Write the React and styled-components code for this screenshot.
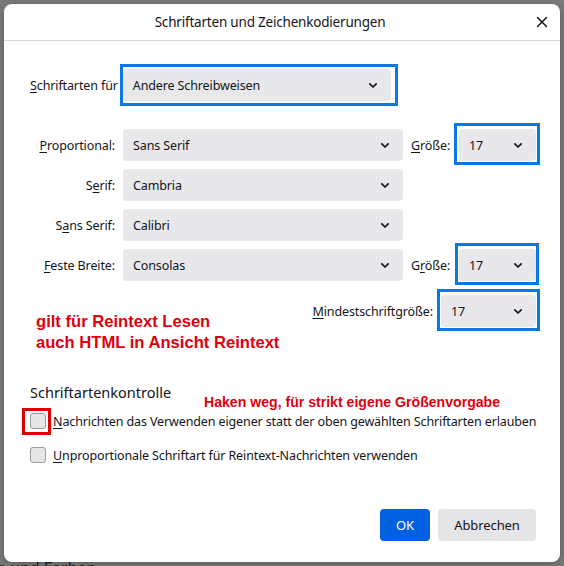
import React from "react";
import styled, { createGlobalStyle } from "styled-components";

const GlobalStyle = createGlobalStyle`
  html, body { margin: 0; padding: 0; }
  body {
    width: 564px;
    height: 566px;
    overflow: hidden;
    background: #7b7b7b;
    font-family: "Noto Sans", "Open Sans", sans-serif;
    color: #15141a;
  }
  * { box-sizing: border-box; }
`;

const Stage = styled.div`
  position: relative;
  width: 564px;
  height: 566px;
  padding: 4px 4px 0 4px;
  background: #7b7b7b;
  overflow: hidden;
`;

const BackText = styled.div`
  position: absolute;
  left: ${(p) => p.$x}px;
  top: ${(p) => p.$y}px;
  font-size: 16px;
  line-height: 18px;
  color: #1a1a1a;
  white-space: nowrap;
`;

const Dialog = styled.div`
  position: relative;
  width: 556px;
  height: 558px;
  background: #fff;
  border-radius: 8px;
  display: flex;
  flex-direction: column;
  box-shadow: 0 2px 10px rgba(0, 0, 0, 0.25);
`;

const Header = styled.div`
  height: 37px;
  display: flex;
  align-items: center;
  padding: 0 6px;
  border-bottom: 1px solid #d4d4d8;
`;

const Title = styled.div`
  flex: 1;
  text-align: center;
  font-size: 13.5px;
  letter-spacing: -0.2px;
`;

const CloseButton = styled.button`
  width: 24px;
  height: 24px;
  border: none;
  background: transparent;
  padding: 0;
  display: flex;
  align-items: center;
  justify-content: center;
  color: #15141a;
`;

const Body = styled.div`
  flex: 1;
  display: flex;
  flex-direction: column;
  padding: 0 20px 21px 26px;
  font-size: 12.5px;
  letter-spacing: -0.12px;
`;

const TopRow = styled.div`
  margin-top: 28px;
  display: flex;
  align-items: center;
  gap: 5px;
`;

const Label = styled.label`
  white-space: nowrap;
  text-align: ${(p) => (p.$right ? "right" : "left")};
`;

const Key = styled.u`
  text-decoration-thickness: 1px;
  text-underline-offset: 2px;
`;

const SelectWrap = styled.div`
  position: relative;
  width: ${(p) => p.$w}px;
`;

const SelectBox = styled.div`
  height: 32px;
  border-radius: 4px;
  background: #e8e8ea;
  display: flex;
  align-items: center;
  justify-content: space-between;
  padding: 0 13px 0 10px;
`;

const Highlight = styled.div`
  position: absolute;
  top: ${(p) => p.$t}px;
  bottom: ${(p) => p.$b}px;
  left: ${(p) => p.$l}px;
  right: ${(p) => p.$r}px;
  border: 3px solid #0a78e4;
  pointer-events: none;
`;

const FontGrid = styled.div`
  margin-top: 28px;
  display: grid;
  grid-template-columns: 85px 280px 40px 77px;
  grid-auto-rows: 32px;
  column-gap: 8px;
  row-gap: 8px;
  align-items: center;
`;

const MinRow = styled.div`
  margin-top: 14px;
  margin-right: 4px;
  display: flex;
  justify-content: flex-end;
  align-items: center;
  gap: 8px;
`;

const SectionTitle = styled.div`
  margin-top: 55px;
  font-size: 14.5px;
  letter-spacing: 0;
  line-height: 20px;
`;

const CheckRow = styled.div`
  margin-top: ${(p) => p.$mt}px;
  display: flex;
  align-items: center;
  gap: 7px;
  height: 20px;
  white-space: nowrap;
`;

const CheckWrap = styled.div`
  position: relative;
  flex: none;
  width: 16px;
  height: 16px;
`;

const CheckBox = styled.div`
  width: 16px;
  height: 16px;
  border-radius: 3px;
  background: #e6e6e8;
  border: 1px solid #9a9aa0;
`;

const RedFrame = styled.div`
  position: absolute;
  left: -8px;
  right: -5px;
  top: -5px;
  bottom: -6px;
  border: 3px solid #e00000;
  pointer-events: none;
`;

const Footer = styled.div`
  margin-top: auto;
  margin-right: 4px;
  display: flex;
  justify-content: flex-end;
  gap: 8px;
`;

const Button = styled.button`
  height: 32px;
  width: ${(p) => (p.$primary ? 50 : 98)}px;
  padding: 0;
  border: none;
  border-radius: 4px;
  font-family: inherit;
  font-size: 13px;
  letter-spacing: -0.1px;
  background: ${(p) => (p.$primary ? "#0061e0" : "#e5e5e8")};
  color: ${(p) => (p.$primary ? "#fff" : "#15141a")};
`;

const Note = styled.div`
  position: absolute;
  left: ${(p) => p.$x}px;
  top: ${(p) => p.$y}px;
  font-family: "Liberation Sans", Arial, sans-serif;
  font-weight: bold;
  font-size: ${(p) => p.$size}px;
  line-height: ${(p) => p.$lh}px;
  color: #e0000f;
  white-space: nowrap;
`;

const Chevron = () => (
  <svg width="10" height="7" viewBox="0 0 10 7">
    <path d="M1.8 1.8 L5 5 L8.2 1.8" fill="none" stroke="#15141a" strokeWidth="1.7" strokeLinecap="round" strokeLinejoin="round" />
  </svg>
);

const Select = ({ value, w, hl }) => (
  <SelectWrap $w={w}>
    <SelectBox>
      <span>{value}</span>
      <Chevron />
    </SelectBox>
    {hl && <Highlight $t={hl[0]} $r={hl[1]} $b={hl[2]} $l={hl[3]} />}
  </SelectWrap>
);

const Check = ({ framed, children }) => (
  <>
    <CheckWrap>
      <CheckBox />
      {framed && <RedFrame />}
    </CheckWrap>
    <span>{children}</span>
  </>
);

export default function App() {
  return (
    <>
      <GlobalStyle />
      <Stage>
        <BackText $x={-4} $y={559}>n und Farben</BackText>
        <Dialog>
          <Header>
            <Title>Schriftarten und Zeichenkodierungen</Title>
            <CloseButton aria-label="Schließen">
              <svg width="12" height="12" viewBox="0 0 12 12">
                <path d="M1.5 1.5 L10.5 10.5 M10.5 1.5 L1.5 10.5" stroke="#15141a" strokeWidth="1.5" strokeLinecap="round" />
              </svg>
            </CloseButton>
          </Header>
          <Body>
            <TopRow>
              <Label><Key>S</Key>chriftarten für</Label>
              <Select value="Andere Schreibweisen" w={268} hl={[-5, -7, -5, -3]} />
            </TopRow>

            <FontGrid>
              <Label $right><Key>P</Key>roportional:</Label>
              <Select value="Sans Serif" w={280} />
              <Label><Key>G</Key>röße:</Label>
              <Select value="17" w={77} hl={[-6, -4, -4, -5]} />

              <Label $right>S<Key>e</Key>rif:</Label>
              <Select value="Cambria" w={280} />
              <span />
              <span />

              <Label $right>S<Key>a</Key>ns Serif:</Label>
              <Select value="Calibri" w={280} />
              <span />
              <span />

              <Label $right><Key>F</Key>este Breite:</Label>
              <Select value="Consolas" w={280} />
              <Label>G<Key>r</Key>öße:</Label>
              <Select value="17" w={77} hl={[-6, -3, -4, -4]} />
            </FontGrid>

            <MinRow>
              <Label><Key>M</Key>indestschriftgröße:</Label>
              <Select value="17" w={95} hl={[-6, -4, -4, -4]} />
            </MinRow>

            <SectionTitle>Schriftartenkontrolle</SectionTitle>
            <CheckRow $mt={9}>
              <Check framed>
                <Key>N</Key>achrichten das Verwenden eigener statt der oben gewählten Schriftarten erlauben
              </Check>
            </CheckRow>
            <CheckRow $mt={14}>
              <Check>
                <Key>U</Key>nproportionale Schriftart für Reintext-Nachrichten verwenden
              </Check>
            </CheckRow>

            <Footer>
              <Button $primary>OK</Button>
              <Button>Abbrechen</Button>
            </Footer>
          </Body>

          <Note $x={32} $y={307} $size={16.6} $lh={21}>
            gilt für Reintext Lesen
            <br />
            auch HTML in Ansicht Reintext
          </Note>
          <Note $x={200} $y={389} $size={14.1} $lh={18}>
            Haken weg, für strikt eigene Größenvorgabe
          </Note>
        </Dialog>
      </Stage>
    </>
  );
}
